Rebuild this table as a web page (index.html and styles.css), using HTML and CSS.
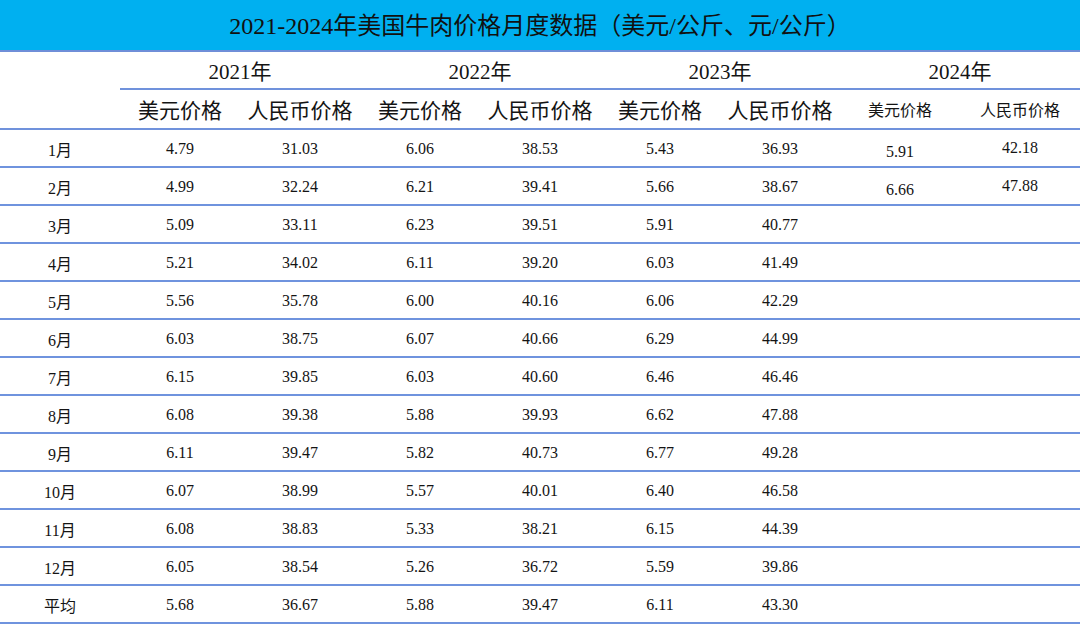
FILE: index.html
```html
<!DOCTYPE html>
<html lang="zh-CN">
<head>
<meta charset="utf-8">
<title>2021-2024年美国牛肉价格月度数据</title>
<link rel="stylesheet" href="styles.css">
</head>
<body>
<div class="page">
  <div class="title">2021-2024年美国牛肉价格月度数据（美元/公斤、元/公斤）</div>
  <table class="grid">
    <colgroup>
      <col class="c-month">
      <col class="c-val"><col class="c-val">
      <col class="c-val"><col class="c-val">
      <col class="c-val"><col class="c-val">
      <col class="c-val"><col class="c-val">
    </colgroup>
    <thead>
      <tr class="year-row">
        <th class="corner" rowspan="2"></th>
        <th class="year" colspan="2">2021年</th>
        <th class="year" colspan="2">2022年</th>
        <th class="year" colspan="2">2023年</th>
        <th class="year" colspan="2">2024年</th>
      </tr>
      <tr class="sub-row">
        <th class="sub">美元价格</th><th class="sub">人民币价格</th>
        <th class="sub">美元价格</th><th class="sub">人民币价格</th>
        <th class="sub">美元价格</th><th class="sub">人民币价格</th>
        <th class="sub small">美元价格</th><th class="sub small">人民币价格</th>
      </tr>
    </thead>
    <tbody>
      <tr><td class="m">1月</td><td>4.79</td><td>31.03</td><td>6.06</td><td>38.53</td><td>5.43</td><td>36.93</td><td class="low">5.91</td><td class="high">42.18</td></tr>
      <tr><td class="m">2月</td><td>4.99</td><td>32.24</td><td>6.21</td><td>39.41</td><td>5.66</td><td>38.67</td><td class="low">6.66</td><td class="high">47.88</td></tr>
      <tr><td class="m">3月</td><td>5.09</td><td>33.11</td><td>6.23</td><td>39.51</td><td>5.91</td><td>40.77</td><td></td><td></td></tr>
      <tr><td class="m">4月</td><td>5.21</td><td>34.02</td><td>6.11</td><td>39.20</td><td>6.03</td><td>41.49</td><td></td><td></td></tr>
      <tr><td class="m">5月</td><td>5.56</td><td>35.78</td><td>6.00</td><td>40.16</td><td>6.06</td><td>42.29</td><td></td><td></td></tr>
      <tr><td class="m">6月</td><td>6.03</td><td>38.75</td><td>6.07</td><td>40.66</td><td>6.29</td><td>44.99</td><td></td><td></td></tr>
      <tr><td class="m">7月</td><td>6.15</td><td>39.85</td><td>6.03</td><td>40.60</td><td>6.46</td><td>46.46</td><td></td><td></td></tr>
      <tr><td class="m">8月</td><td>6.08</td><td>39.38</td><td>5.88</td><td>39.93</td><td>6.62</td><td>47.88</td><td></td><td></td></tr>
      <tr><td class="m">9月</td><td>6.11</td><td>39.47</td><td>5.82</td><td>40.73</td><td>6.77</td><td>49.28</td><td></td><td></td></tr>
      <tr><td class="m">10月</td><td>6.07</td><td>38.99</td><td>5.57</td><td>40.01</td><td>6.40</td><td>46.58</td><td></td><td></td></tr>
      <tr><td class="m">11月</td><td>6.08</td><td>38.83</td><td>5.33</td><td>38.21</td><td>6.15</td><td>44.39</td><td></td><td></td></tr>
      <tr><td class="m">12月</td><td>6.05</td><td>38.54</td><td>5.26</td><td>36.72</td><td>5.59</td><td>39.86</td><td></td><td></td></tr>
      <tr><td class="m">平均</td><td>5.68</td><td>36.67</td><td>5.88</td><td>39.47</td><td>6.11</td><td>43.30</td><td></td><td></td></tr>
    </tbody>
  </table>
</div>
</body>
</html>
```

FILE: styles.css
```css
html, body {
  margin: 0;
  padding: 0;
  background: #ffffff;
}

.page {
  width: 1080px;
  height: 624px;
  overflow: hidden;
  color: #141414;
  font-family: "Liberation Serif", "Noto Sans CJK SC", serif;
}

.title {
  height: 50px;
  line-height: 52px;
  background: #00b0f0;
  border-bottom: 2px solid #6f8ed8;
  text-align: center;
  font-size: 24px;
  color: #111;
  padding-left: 0;
}

.grid {
  width: 1080px;
  table-layout: fixed;
  border-collapse: separate;
  border-spacing: 0;
}

.c-month { width: 120px; }
.c-val { width: 120px; }

.grid th,
.grid td {
  padding: 0;
  text-align: center;
  vertical-align: middle;
  font-weight: normal;
}

.year-row th {
  height: 36px;
  font-size: 21px;
}

.year {
  border-bottom: 2px solid #7092dc;
}

.corner {
  border-bottom: 2px solid #7092dc;
}

.sub-row th {
  height: 38px;
  font-size: 21px;
  font-family: "Noto Sans CJK SC", sans-serif;
  border-bottom: 2px solid #7092dc;
}

.sub-row th.small {
  font-size: 16px;
}

.grid td {
  font-size: 16px;
  border-bottom: 2px solid #6f93de;
  padding-top: 2px;
  box-sizing: border-box;
}

.grid tbody tr td {
  height: 38px;
}

.grid td.low {
  padding-top: 7px;
}

.grid td.high {
  padding-top: 0;
}
```
